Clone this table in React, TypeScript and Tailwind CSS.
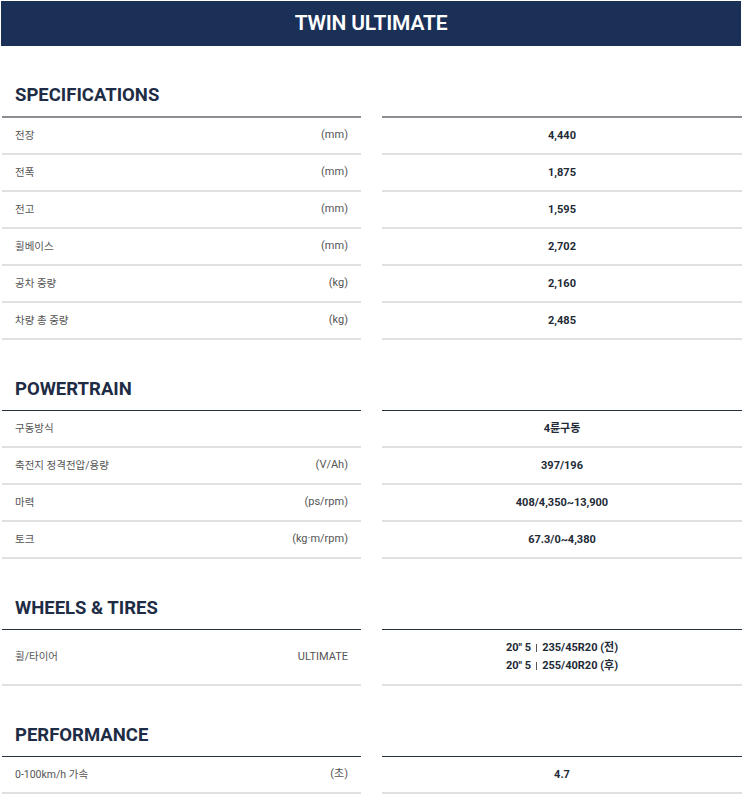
type Row = {
  label: string;
  unit: string;
  value: string[][];
};

type Section = {
  title: string;
  first?: boolean;
  rows: Row[];
};

const sections: Section[] = [
  {
    title: "SPECIFICATIONS",
    first: true,
    rows: [
      { label: "전장", unit: "(mm)", value: [["4,440"]] },
      { label: "전폭", unit: "(mm)", value: [["1,875"]] },
      { label: "전고", unit: "(mm)", value: [["1,595"]] },
      { label: "휠베이스", unit: "(mm)", value: [["2,702"]] },
      { label: "공차 중량", unit: "(kg)", value: [["2,160"]] },
      { label: "차량 총 중량", unit: "(kg)", value: [["2,485"]] },
    ],
  },
  {
    title: "POWERTRAIN",
    rows: [
      { label: "구동방식", unit: "", value: [["4륜구동"]] },
      { label: "축전지 정격전압/용량", unit: "(V/Ah)", value: [["397/196"]] },
      { label: "마력", unit: "(ps/rpm)", value: [["408/4,350~13,900"]] },
      { label: "토크", unit: "(kg·m/rpm)", value: [["67.3/0~4,380"]] },
    ],
  },
  {
    title: "WHEELS & TIRES",
    rows: [
      {
        label: "휠/타이어",
        unit: "ULTIMATE",
        value: [
          ["20\" 5", "235/45R20 (전)"],
          ["20\" 5", "255/40R20 (후)"],
        ],
      },
    ],
  },
  {
    title: "PERFORMANCE",
    rows: [{ label: "0-100km/h 가속", unit: "(초)", value: [["4.7"]] }],
  },
];

const font = { fontFamily: "Roboto, 'Noto Sans CJK KR', sans-serif" };

function SpecSection({ section }: { section: Section }) {
  const line = section.first
    ? "border-b-2 border-[#8a8d92]"
    : "border-b border-[#26303d]";
  return (
    <div className={section.first ? "pt-[37px]" : "pt-[37px]"}>
      <div className="grid grid-cols-[359px_1fr] gap-x-[21px] pl-[2px]">
        <div className={`${line} pb-[9px] pl-[13px]`}>
          <h2 className="text-[18.5px] leading-[24px] font-bold text-[#1e2c45]">
            {section.title}
          </h2>
        </div>
        <div className={line} />
        {section.rows.map((row) => {
          const tall = row.value.length > 1;
          return [
            <div
              key={row.label + "l"}
              className={`flex items-center justify-between pl-[13px] pr-[13px] border-b-2 border-[#e1e1e1] text-[11px] text-[#555] ${
                tall ? "h-[56px]" : "h-[37px]"
              }`}
            >
              <span className="text-[10.5px]">{row.label}</span>
              <span>{row.unit}</span>
            </div>,
            <div
              key={row.label + "r"}
              className={`flex flex-col items-center justify-center border-b-2 border-[#e1e1e1] text-[11px] leading-[18px] font-bold text-[#222a36] ${
                tall ? "h-[56px]" : "h-[37px]"
              }`}
            >
              {row.value.map((parts) => (
                <span key={parts.join()} className="flex items-center">
                  {parts[0]}
                  {parts[1] && (
                    <>
                      <span className="inline-block w-[1px] h-[8px] bg-[#555] mx-[5px]" />
                      {parts[1]}
                    </>
                  )}
                </span>
              ))}
            </div>,
          ];
        })}
      </div>
    </div>
  );
}

export default function App() {
  return (
    <div className="bg-white w-[742px] pb-10" style={font}>
      <div className="h-[45px] mx-[1px] mt-[1px] bg-[#1b3057] flex items-center justify-center">
        <h1 className="text-white text-[21px] font-semibold tracking-[-0.2px]">
          TWIN ULTIMATE
        </h1>
      </div>
      {sections.map((s) => (
        <SpecSection key={s.title} section={s} />
      ))}
    </div>
  );
}
